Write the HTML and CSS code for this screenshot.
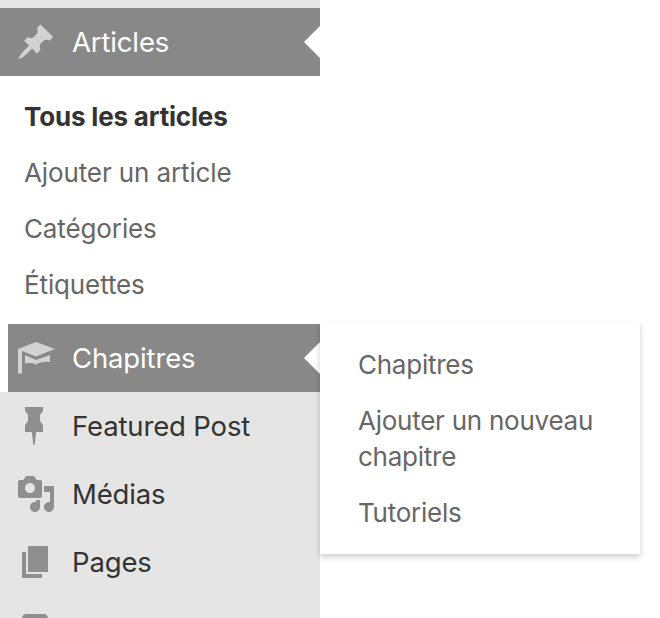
FILE: index.html
```html
<html>
<head>
  <meta charset="utf-8">
  <title>Menu</title>
  <link rel="stylesheet" href="styles.css">
</head>
<body>
  <ul class="sidebar">
    <li class="menu-item current">
      <a class="menu-link">
        <svg class="menu-icon" viewBox="0 0 20 20"><path d="M10.44 3.02l1.82-1.82 6.36 6.35-1.83 1.82c-1.05-.68-2.48-.57-3.41.36l-.75.75c-.92.93-1.04 2.35-.35 3.41l-1.83 1.82-2.41-2.41-2.8 2.79c-.42.42-3.38 2.71-3.8 2.29s1.86-3.39 2.28-3.81l2.79-2.79L4.1 9.36l1.83-1.82c1.05.69 2.48.57 3.4-.36l.75-.75c.93-.92 1.05-2.35.36-3.41z"/></svg>
        Articles
      </a>
      <ul class="submenu">
        <li class="submenu-item active">Tous les articles</li>
        <li class="submenu-item">Ajouter un article</li>
        <li class="submenu-item">Catégories</li>
        <li class="submenu-item">Étiquettes</li>
      </ul>
    </li>

    <li class="menu-item hovered">
      <a class="menu-link">
        <svg class="menu-icon" viewBox="0 0 20 20"><path d="M10 2l9.500 3.500L10 9.200 3 6.500v11.300H1V5.500zM4.500 8.500L10 11l7-2.500V12c-2.700-.4-5 0-7 1.200-1.700-.7-3.500-.8-5.500-.5z"/></svg>
        Chapitres
      </a>
      <ul class="flyout">
        <li class="flyout-item">Chapitres</li>
        <li class="flyout-item">Ajouter un nouveau chapitre</li>
        <li class="flyout-item">Tutoriels</li>
      </ul>
    </li>

    <li class="menu-item">
      <a class="menu-link">
        <svg class="menu-icon" viewBox="0 0 20 20"><path d="M4.500.5h9v2L12 4.500v3l1.500 2V13H10.100l-.8 6.500h-.6L7.900 13H4.500V9.500L6 7.500v-3l-1.500-2z"/></svg>
        Featured Post
      </a>
    </li>

    <li class="menu-item">
      <a class="menu-link">
        <svg class="menu-icon" viewBox="0 0 20 20"><path d="M13 11V4c0-.55-.45-1-1-1h-1.670L9 1H5L3.670 3H2c-.55 0-1 .45-1 1v7c0 .55.45 1 1 1h10c.55 0 1-.45 1-1zM7 4.500c1.380 0 2.500 1.120 2.500 2.500S8.380 9.500 7 9.500 4.500 8.380 4.500 7 5.620 4.500 7 4.500zM14 6h5v10.500c0 1.380-1.120 2.500-2.500 2.500S14 17.880 14 16.500s1.120-2.500 2.500-2.500c.17 0 .34.02.5.05V9h-3V6zm-4 8.050V13h2v3.500c0 1.380-1.120 2.500-2.500 2.500S7 17.880 7 16.500 8.120 14 9.500 14c.17 0 .34.02.5.05z"/></svg>
        Médias
      </a>
    </li>

    <li class="menu-item">
      <a class="menu-link">
        <svg class="menu-icon" viewBox="0 0 20 20"><path d="M6 15V2h10v13H6zm-1 1h8v2H3V5h2v11z"/></svg>
        Pages
      </a>
    </li>

    <li class="menu-item cut-off">
      <a class="menu-link">
        <svg class="menu-icon" viewBox="0 0 20 20"><path d="M5 2h9c1.100 0 2 .9 2 2v7c0 1.100-.9 2-2 2h-2l-5 5v-5H5c-1.100 0-2-.9-2-2V4c0-1.100.9-2 2-2z"/></svg>
      </a>
    </li>
  </ul>
</body>
</html>
```

FILE: styles.css
```css
html, body {
  margin: 0;
  height: 100%;
  overflow: hidden;
  background-color: #ffffff;
}

body {
  font-family: 'Inter', 'Liberation Sans', sans-serif;
  font-size: 26px;
}

ul {
  list-style: none;
  margin: 0;
  padding: 0;
}

.sidebar {
  width: 320px;
  height: 618px;
  padding-top: 8px;
  box-sizing: border-box;
  background-color: #e5e5e5;
}

.menu-item {
  position: relative;
  color: #333333;
}

.menu-link {
  display: flex;
  align-items: center;
  gap: 16px;
  height: 68px;
  padding-left: 16px;
  font-size: 27.5px;
  letter-spacing: -0.15px;
}

.menu-icon {
  flex-shrink: 0;
  width: 40px;
  height: 40px;
  fill: #8f8f8f;
}

.current .menu-link,
.hovered .menu-link {
  position: relative;
  background-color: #888888;
  color: #ffffff;
}

.current .menu-icon,
.hovered .menu-icon {
  fill: #d2d2d2;
}

/* white notch on the right edge of the highlighted row */
.current .menu-link::after,
.hovered .menu-link::after {
  content: "";
  position: absolute;
  top: 18px;
  right: 0;
  border-top: 16px solid transparent;
  border-bottom: 16px solid transparent;
  border-right: 16px solid #ffffff;
}

.hovered {
  border-left: 8px solid #ffffff;
}

.hovered .menu-link {
  padding-left: 8px;
}

/* last row is cut by the bottom of the window */
.cut-off .menu-link {
  align-items: flex-start;
  height: 8px;
  padding-top: 14px;
  overflow: hidden;
}

.submenu {
  padding: 13px 0 11px;
  background-color: #ffffff;
}

.submenu-item {
  height: 56px;
  line-height: 56px;
  padding-left: 24px;
  color: #666666;
  letter-spacing: -0.12px;
}

.submenu-item.active {
  color: #333333;
  font-weight: 700;
  letter-spacing: -0.18px;
}

.flyout {
  position: absolute;
  top: -2px;
  left: 312px;
  width: 320px;
  box-sizing: border-box;
  padding: 15px 0 13px;
  background-color: #ffffff;
  box-shadow: 0 3px 6px rgba(0, 0, 0, 0.2);
}

.flyout-item {
  padding: 10px 38px;
  line-height: 36px;
  color: #666666;
  letter-spacing: -0.25px;
}
```
